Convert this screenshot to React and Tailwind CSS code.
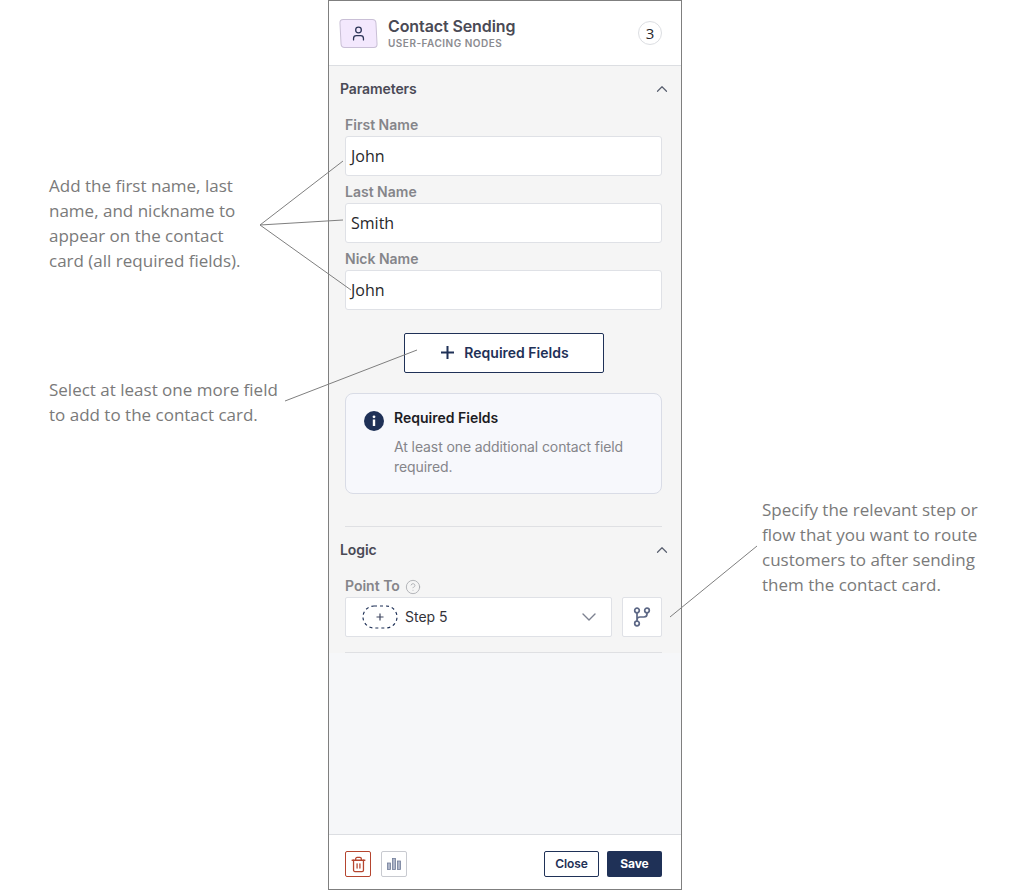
import { ChevronUp, ChevronDown, Trash2, CircleHelp, User } from "lucide-react";

const inter = "font-['Inter','Liberation_Sans',sans-serif]";
const note = "font-['Open_Sans','Noto_Sans',sans-serif] text-[17px] leading-[25px] text-[#7a7a7a]";

const Field = ({ label, value }) => (
  <div className="flex flex-col">
    <label className="h-[22px] pt-[1px] text-[14px] leading-[20px] font-semibold text-[#85858a]">{label}</label>
    <div className="h-[40px] bg-white border border-[#dfe1e6] rounded-[3px] pl-[5px] flex items-center font-['Open_Sans',sans-serif] text-[16px] text-[#27272a]">
      {value}
    </div>
  </div>
);

const SectionHeader = ({ title }) => (
  <div className="h-[20px] flex items-center justify-between">
    <span className="text-[14px] font-semibold text-[#4a4a55] tracking-[-0.1px]">{title}</span>
    <ChevronUp size={18} strokeWidth={1.6} className="text-[#5a6070] mt-[1px] mr-[-1px]" />
  </div>
);

const Panel = () => (
  <div className={`w-[354px] h-[890px] shrink-0 border border-[#7f7f7f] bg-white flex flex-col ${inter}`}>
    <div className="h-[65px] shrink-0 flex items-center pl-[11px] pr-[19px] border-b border-[#dcdee2]">
      <div className="w-[37px] h-[29px] rounded-[4px] bg-[#f3e8fd] border border-[#c9bfd6] flex items-center justify-center skew-x-[3deg]">
        <User size={17} strokeWidth={1.8} className="text-[#2d3558] -skew-x-[3deg]" />
      </div>
      <div className="ml-[11px] flex-1">
        <div className="text-[16px] leading-[20px] font-semibold text-[#4a4a55] tracking-[-0.1px]">Contact Sending</div>
        <div className="text-[10px] leading-[14px] font-semibold text-[#8b8b90] tracking-[0.5px]">USER-FACING NODES</div>
      </div>
      <div className="w-[24px] h-[24px] rounded-full border border-[#dcdee2] flex items-center justify-center font-['Open_Sans',sans-serif] text-[15px] text-[#27272a]">
        3
      </div>
    </div>

    <div className="h-[587px] shrink-0 bg-[#f5f5f5] flex flex-col">
      <div className="px-[11px] pt-[12px]">
        <SectionHeader title="Parameters" />
      </div>
      <div className="pl-[16px] pr-[19px] pt-[16px] flex flex-col gap-[5px]">
        <Field label="First Name" value="John" />
        <Field label="Last Name" value="Smith" />
        <Field label="Nick Name" value="John" />
      </div>
      <div className="flex justify-center mt-[23px] pr-[2px]">
        <button className="w-[200px] h-[40px] pb-[2px] bg-white border border-[#1f3157] rounded-[2px] flex items-center justify-center gap-[10px] text-[14px] font-semibold text-[#1f3157]">
          <svg width="13" height="13" viewBox="0 0 13 13" stroke="currentColor" strokeWidth="2" className="mt-[1px] ml-[2px]">
            <path d="M6.5 0v13M0 6.5h13" />
          </svg>
          Required Fields
        </button>
      </div>
      <div className="ml-[16px] mr-[19px] mt-[20px] h-[101px] bg-[#f7f8fc] border border-[#d9dce6] rounded-[8px] pl-[18px] pt-[14px] pr-[20px] flex gap-[10px]">
        <svg width="20" height="20" viewBox="0 0 20 20" className="shrink-0 mt-[3px]">
          <circle cx="10" cy="10" r="10" fill="#1f3157" />
          <circle cx="10" cy="5.8" r="1.4" fill="#fff" />
          <rect x="8.8" y="8.5" width="2.4" height="6.5" fill="#fff" />
        </svg>
        <div>
          <div className="text-[14px] leading-[20px] font-semibold text-[#1c1c24]">Required Fields</div>
          <div className="text-[14px] leading-[20px] text-[#85858a] mt-[9px] tracking-[-0.1px]">At least one additional contact field required.</div>
        </div>
      </div>
      <div className="ml-[16px] mr-[19px] mt-[32px] border-t border-[#dfe0e3]" />
      <div className="px-[11px] pt-[12px]">
        <SectionHeader title="Logic" />
      </div>
      <div className="pl-[16px] pr-[19px] pt-[17px]">
        <div className="h-[21px] pb-[3px] flex items-center gap-[5px] text-[14px] font-semibold text-[#85858a]">
          Point To
          <CircleHelp size={16} strokeWidth={1.3} className="text-[#a9abb0] mt-[4px]" />
        </div>
        <div className="flex gap-[10px]">
          <div className="w-[267px] h-[40px] bg-white border border-[#dfe1e6] rounded-[2px] flex items-center pl-[16px] pr-[10px]">
            <svg width="36" height="24" viewBox="0 0 36 24" fill="none" className="shrink-0">
              <rect x="1" y="1" width="34" height="22" rx="11" stroke="#1f3157" strokeWidth="1.2" strokeDasharray="3 3" />
              <path d="M18 8.5v7M14.5 12h7" stroke="#3f4660" strokeWidth="1.2" />
            </svg>
            <span className="ml-[7px] mb-[2px] flex-1 text-[14px] text-[#33333a]">Step 5</span>
            <ChevronDown size={24} strokeWidth={1.4} className="text-[#7c8190]" />
          </div>
          <div className="w-[40px] h-[40px] bg-white border border-[#dfe1e6] rounded-[2px] flex items-center justify-center">
            <svg width="18" height="20" viewBox="0 0 18 20" fill="none" stroke="#5c6785" strokeWidth="1.7">
              <circle cx="4" cy="3.5" r="2.3" />
              <circle cx="14" cy="3.5" r="2.3" />
              <circle cx="4" cy="16.5" r="2.3" />
              <path d="M4 5.8v8.4M14 5.8V7a3 3 0 0 1-3 3H7a3 3 0 0 0-3 3" />
            </svg>
          </div>
        </div>
        <div className="mt-[15px] border-t border-[#dfe0e3]" />
      </div>
    </div>

    <div className="flex-1 bg-[#f6f7f9]" />

    <div className="h-[55px] shrink-0 border-t border-[#dcdee2] bg-white flex items-start pt-[16px] pl-[16px] pr-[19px]">
      <button className="w-[26px] h-[26px] border border-[#b5452f] rounded-[2px] flex items-center justify-center">
        <Trash2 size={17} strokeWidth={1.8} className="text-[#b5452f]" />
      </button>
      <button className="ml-[10px] w-[26px] h-[26px] border border-[#c8cad0] rounded-[2px] flex items-center justify-center">
        <svg width="14" height="12" viewBox="0 0 14 12" fill="#aeb5c8" stroke="#727d99" strokeWidth="0.8">
          <rect x="0.5" y="5" width="3" height="6.5" />
          <rect x="5.5" y="0.5" width="3" height="11" />
          <rect x="10.5" y="3" width="3" height="8.5" />
        </svg>
      </button>
      <div className="flex-1" />
      <button className="w-[55px] h-[26px] bg-white border border-[#1f3157] rounded-[2px] text-[12px] font-semibold text-[#1f3157] tracking-[-0.1px]">Close</button>
      <button className="ml-[8px] w-[55px] h-[26px] bg-[#1f3157] rounded-[2px] text-[12px] font-bold text-white tracking-[-0.1px]">Save</button>
    </div>
  </div>
);

export default function App() {
  return (
    <div className="relative w-[1013px] h-[890px] bg-white overflow-hidden flex">
      <div className={`w-[328px] shrink-0 pl-[49px] ${note}`}>
        <p className="mt-[173px] w-[200px]">Add the first name, last name, and nickname to appear on the contact card (all required fields).</p>
        <p className="mt-[104px] w-[240px]">Select at least one more field to add to the contact card.</p>
      </div>
      <Panel />
      <div className={`flex-1 pl-[80px] pr-[20px] ${note}`}>
        <p className="mt-[497px]">Specify the relevant step or flow that you want to route customers to after sending them the contact card.</p>
      </div>
      {/* callout lines sit over the panel */}
      <svg className="absolute inset-0 pointer-events-none" width="1013" height="890" fill="none" stroke="#7f7f7f" strokeWidth="1">
        <path d="M343 161 L260 225 L343 220 M260 225 L351 290" />
        <path d="M285 401 L417 350" />
        <path d="M670 617 L757 546" />
      </svg>
    </div>
  );
}
